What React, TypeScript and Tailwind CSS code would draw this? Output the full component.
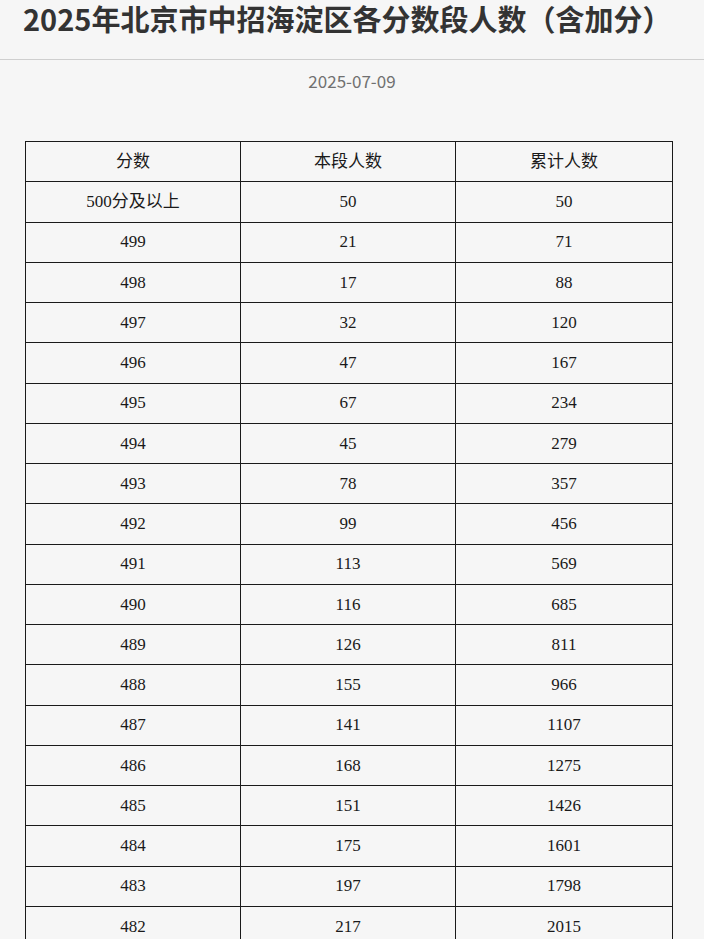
const rows: [string, number, number][] = [
  ["500分及以上", 50, 50],
  ["499", 21, 71],
  ["498", 17, 88],
  ["497", 32, 120],
  ["496", 47, 167],
  ["495", 67, 234],
  ["494", 45, 279],
  ["493", 78, 357],
  ["492", 99, 456],
  ["491", 113, 569],
  ["490", 116, 685],
  ["489", 126, 811],
  ["488", 155, 966],
  ["487", 141, 1107],
  ["486", 168, 1275],
  ["485", 151, 1426],
  ["484", 175, 1601],
  ["483", 197, 1798],
  ["482", 217, 2015],
];

const cellClass =
  "h-[40.25px] border border-[#1a1a1a] p-0 text-center align-middle";

export default function App() {
  return (
    <div className="h-[939px] overflow-hidden bg-[#f6f6f6] font-['Noto_Sans_CJK_SC',sans-serif]">
      <header className="px-[23px] pt-0">
        <h1 className="mt-[-10px] text-[29px] leading-[56px] font-bold text-[#333]">
          2025年北京市中招海淀区各分数段人数（含加分）
        </h1>
      </header>
      <div className="mt-[13px] h-px bg-[#cfcfcf]" />

      <p className="mt-[9px] text-center text-[17px] leading-[24px] text-[#707070]">
        2025-07-09
      </p>

      <div className="mt-[48px] pl-[25px]">
        <table className="w-[647px] table-fixed border-collapse font-['Liberation_Serif','Noto_Sans_CJK_SC',serif] text-[17px] text-[#1a1a1a]">
          <colgroup>
            <col className="w-[215px]" />
            <col className="w-[215px]" />
            <col className="w-[217px]" />
          </colgroup>
          <thead>
            <tr>
              <th className={`${cellClass} font-normal`}>分数</th>
              <th className={`${cellClass} font-normal`}>本段人数</th>
              <th className={`${cellClass} font-normal`}>累计人数</th>
            </tr>
          </thead>
          <tbody>
            {rows.map(([score, count, total]) => (
              <tr key={score}>
                <td className={cellClass}>{score}</td>
                <td className={cellClass}>{count}</td>
                <td className={cellClass}>{total}</td>
              </tr>
            ))}
          </tbody>
        </table>
      </div>
    </div>
  );
}
